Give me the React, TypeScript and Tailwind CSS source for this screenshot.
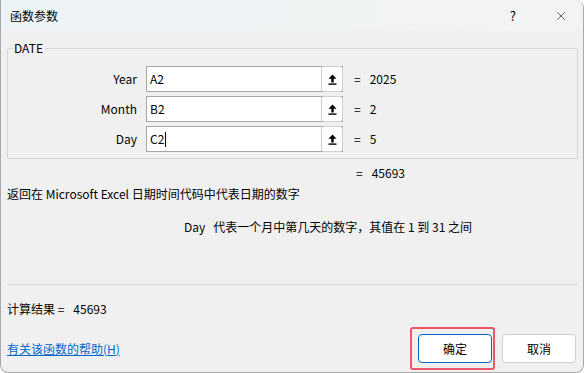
import { X } from 'lucide-react';

const font = { fontFamily: '"Noto Sans CJK SC", "Noto Sans", sans-serif' };

const args = [
  { label: 'Year', ref: 'A2', value: '2025' },
  { label: 'Month', ref: 'B2', value: '2' },
  { label: 'Day', ref: 'C2', value: '5', caret: true },
];

function UploadIcon() {
  return (
    <svg width="9" height="11" viewBox="0 0 9 11">
      <path d="M4.5 0.5 L8.5 4.8 L5.7 4.8 L5.7 8.5 L3.3 8.5 L3.3 4.8 L0.5 4.8 Z" fill="#000" />
      <rect x="0.5" y="9.4" width="8" height="1.4" fill="#000" />
    </svg>
  );
}

function ArgRow({ label, refText, value, caret }: { label: string; refText: string; value: string; caret?: boolean }) {
  return (
    <div className="flex h-[26px] items-center">
      <div className="w-[129px] text-right text-[12px] text-black">{label}</div>
      <div className="ml-[9px] flex h-[26px] w-[197px] border border-[#a6a6a6] bg-white">
        <div className="flex flex-1 items-center pl-[3px] text-[12px] text-black">
          {refText}
          {caret && <span className="ml-[1px] inline-block h-[15px] w-px bg-black" />}
        </div>
        <div className="-mr-px -mt-px flex h-[26px] w-[22px] items-center justify-center rounded-[3px] border border-[#cfcfcf] bg-white">
          <UploadIcon />
        </div>
      </div>
      <div className="ml-[11px] text-[12px] text-black">=</div>
      <div className="ml-[9px] text-[12px] text-black">{value}</div>
    </div>
  );
}

export default function App() {
  return (
    <div className="h-[373px] w-[585px] bg-white" style={font}>
      <div className="flex h-[373px] w-[584px] flex-col overflow-hidden rounded-b-[8px] rounded-tr-[8px] border-b border-l border-r border-[#a9a9a9] bg-[#f0f0f0]">
        {/* Title bar */}
        <div className="flex h-[31px] shrink-0 items-center bg-gradient-to-r from-[#ecf3f6] to-[#f3f3f3]">
          <span className="ml-[9px] text-[12px] text-black">函数参数</span>
          <span className="ml-auto text-[13px] text-black">?</span>
          <div className="ml-[38px] mr-[15px] flex w-[14px] items-center justify-center">
            <X size={16} strokeWidth={1.1} color="#111" />
          </div>
        </div>

        <div className="flex flex-1 flex-col px-[6px]">
          {/* Argument group */}
          <fieldset className="mt-[9px] w-[571px] rounded-[2px] border border-[#d6d6d6] px-0 pb-[6px]">
            <legend className="ml-[4px] px-[2px] text-[12px] leading-[16px] text-black">DATE</legend>
            <div className="mt-[10px] flex flex-col gap-[4px]">
              {args.map((a) => (
                <ArgRow key={a.label} label={a.label} refText={a.ref} value={a.value} caret={a.caret} />
              ))}
            </div>
          </fieldset>

          <div className="mt-[6px] flex h-[16px] items-center text-[12px] text-black">
            <span className="ml-[349px]">=</span>
            <span className="ml-[9px]">45693</span>
          </div>

          <div className="mt-[5px] h-[16px] text-[12px] leading-[16px] text-black">
            返回在 Microsoft Excel 日期时间代码中代表日期的数字
          </div>

          <div className="mt-[17px] flex h-[16px] items-center text-[12px] text-black">
            <span className="ml-[177px]">Day</span>
            <span className="ml-[8px]">代表一个月中第几天的数字，其值在 1 到 31 之间</span>
          </div>

          <div className="mt-[49px] h-px w-[571px] bg-[#d9d9d9]" />

          <div className="mt-[16px] flex h-[16px] items-center text-[12px] text-black">
            <span>计算结果 =</span>
            <span className="ml-[9px]">45693</span>
          </div>

          <div className="mt-[10px] flex items-center">
            <span className="cursor-pointer text-[12px] text-[#0066cc] underline">有关该函数的帮助(H)</span>
            <div className="ml-auto rounded-[3px] border-2 border-[#f0566a] py-[5px] pl-[6px] pr-[1px]">
              <button className="flex h-[29px] w-[74px] items-center justify-center rounded-[4px] border border-[#0067c0] bg-white text-[12px] text-black">
                确定
              </button>
            </div>
            <button className="ml-[7px] mr-[1px] flex h-[29px] w-[74px] items-center justify-center rounded-[4px] border border-[#d0d0d0] bg-white text-[12px] text-black">
              取消
            </button>
          </div>
        </div>
      </div>
    </div>
  );
}
